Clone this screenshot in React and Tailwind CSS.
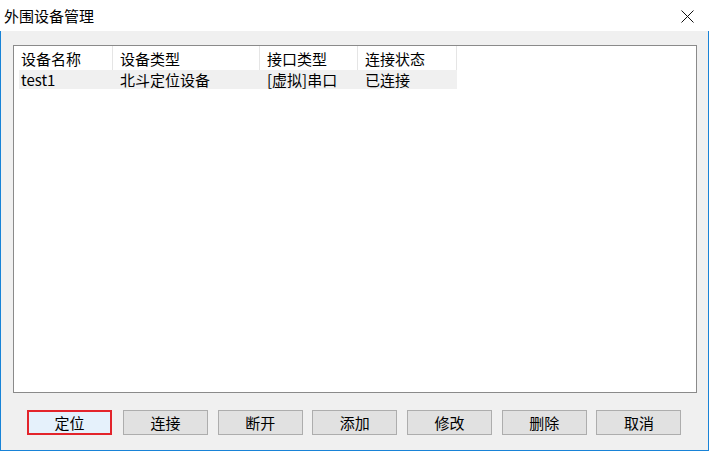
import React from 'react';

const columns = [
  { key: 'name', label: '设备名称', width: 'w-[99px]', first: true },
  { key: 'type', label: '设备类型', width: 'w-[147px]' },
  { key: 'port', label: '接口类型', width: 'w-[98px]' },
  { key: 'state', label: '连接状态', width: 'w-[99px]' },
];

const rows = [
  { name: 'test1', type: '北斗定位设备', port: '[虚拟]串口', state: '已连接' },
];

const buttons = ['定位', '连接', '断开', '添加', '修改', '删除', '取消'];

const DeviceManager = () => {
  return (
    <div className="w-[709px] h-[451px] flex flex-col font-['Microsoft_YaHei','Noto_Sans_CJK_SC',sans-serif] text-black select-none">
      {/* 标题栏 */}
      <div className="h-[31px] shrink-0 bg-white flex items-center justify-between pl-[4px] pr-[15px]">
        <span className="text-[15px] leading-none">外围设备管理</span>
        <svg width="13" height="13" viewBox="0 0 13 13" className="mt-[1px]">
          <path d="M0.5 0.5 L12.5 12.5 M12.5 0.5 L0.5 12.5" stroke="#111" strokeWidth="1" fill="none" />
        </svg>
      </div>

      {/* 主体 */}
      <div className="flex-1 bg-[#f0f0f0] border-x border-b border-[#1883d7] flex flex-col pl-[12px] pt-[14px]">
        <div className="w-[684px] h-[348px] border border-[#8a8a8a] bg-white">
          {/* 表头 */}
          <div className="flex h-[24px]">
            {columns.map((c) => (
              <div
                key={c.key}
                className={`${c.width} h-full border-r border-[#e5e5e5] pl-[7px] flex items-center text-[15px] leading-none`}
              >
                {c.label}
              </div>
            ))}
          </div>
          {/* 数据行 */}
          {rows.map((r, i) => (
            <div key={i} className="flex h-[19px]">
              {columns.map((c) => (
                <div
                  key={c.key}
                  className={`${c.width} h-full bg-[#f0f0f0] flex items-center text-[15px] leading-none ${
                    c.first ? 'ml-[5px] !w-[94px] pl-[2px]' : 'pl-[7px]'
                  }`}
                >
                  {r[c.key]}
                </div>
              ))}
            </div>
          ))}
        </div>

        {/* 按钮 */}
        <div className="flex mt-[17px] pl-[14px] gap-[9.7px]">
          {buttons.map((b, i) => (
            <button
              key={b}
              className={`w-[85px] h-[25px] flex items-center justify-center text-[15px] leading-none ${
                i === 0
                  ? 'border-2 border-[#e3242b] bg-[#e5f1fb] mr-[1.3px]'
                  : 'border border-[#adadad] bg-[#e1e1e1]'
              }`}
            >
              {b}
            </button>
          ))}
        </div>
      </div>
    </div>
  );
};

export default DeviceManager;
